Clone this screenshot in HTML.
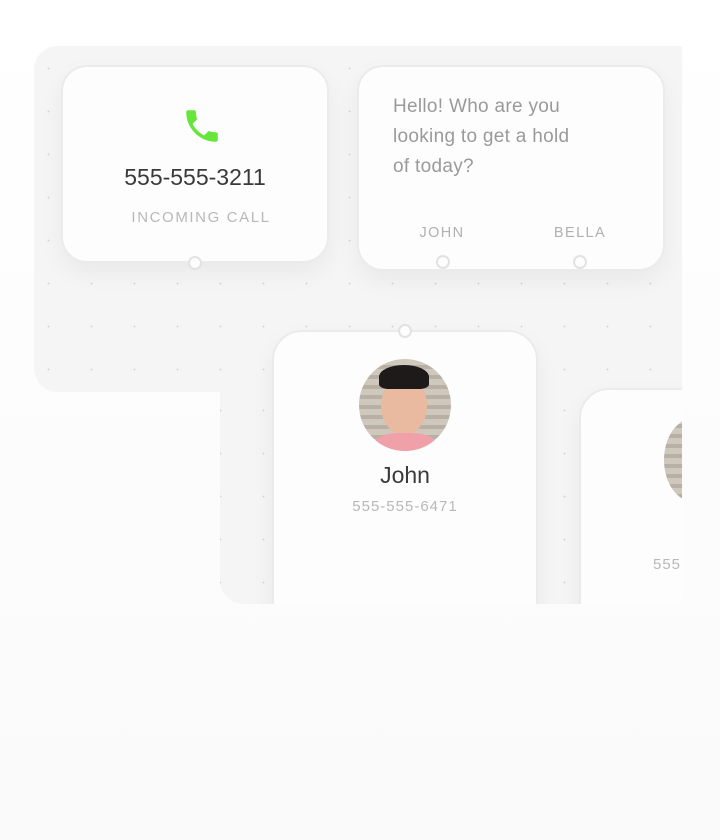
<!DOCTYPE html>
<html><head><style>
*{margin:0;padding:0;box-sizing:border-box}
body{width:720px;height:840px;background:linear-gradient(#ffffff,#fafafa);font-family:"Liberation Sans",sans-serif;position:relative;overflow:hidden}
.clip{position:absolute;left:0;top:0;width:682px;height:604px;overflow:hidden}
.panel{position:absolute;background:#f5f5f5;background-image:radial-gradient(circle,#d2d2d2 0.7px,transparent 1.1px);background-size:43px 43px;background-position:36px 44px}
.card{position:absolute;background:#fdfdfd;border:2px solid #ebebeb;border-radius:26px;box-shadow:0 10px 24px rgba(0,0,0,0.05)}
.dot{position:absolute;width:14px;height:14px;border-radius:50%;background:#fdfdfd;border:2px solid #e2e2e2}
.t{position:absolute;text-align:center}
</style></head><body>
<div class="clip">
<div class="panel" style="left:34px;top:46px;width:700px;height:346px;border-radius:24px 24px 0 24px"></div>
<div class="panel" style="left:220px;top:380px;width:520px;height:224px;border-radius:0 0 0 24px;background-position:-150px -292px"></div>

<div class="card" style="left:61px;top:65px;width:268px;height:198px"></div>
<svg style="position:absolute;left:181px;top:105px" width="42" height="42" viewBox="0 0 24 24"><path fill="#66e63a" d="M6.6 10.8c1.4 2.8 3.8 5.1 6.6 6.6l2.2-2.2c.3-.3.7-.4 1-.2 1.1.4 2.3.6 3.6.6.6 0 1 .4 1 1V20c0 .6-.4 1-1 1C10.6 21 3 13.4 3 4c0-.6.4-1 1-1h3.5c.6 0 1 .4 1 1 0 1.3.2 2.5.6 3.6.1.3 0 .7-.2 1L6.6 10.8z"/></svg>
<div class="t" style="left:61px;width:268px;top:164px;font-size:23px;color:#3a3a3a">555-555-3211</div>
<div class="t" style="left:61px;width:280px;top:209px;font-size:15px;color:#b8b8b8;letter-spacing:1.6px">INCOMING CALL</div>
<div class="dot" style="left:188px;top:256px"></div>

<div class="card" style="left:357px;top:65px;width:308px;height:206px"></div>
<div style="position:absolute;left:393px;top:92px;font-size:19px;line-height:30px;color:#9a9a9a;width:188px;letter-spacing:0.3px">Hello! Who are you looking to get a hold of today?</div>
<div class="t" style="left:402px;width:80px;top:225px;font-size:14.5px;color:#b0b0b0;letter-spacing:1.4px">JOHN</div>
<div class="t" style="left:540px;width:80px;top:225px;font-size:14.5px;color:#b0b0b0;letter-spacing:1.4px">BELLA</div>
<div class="dot" style="left:436px;top:255px"></div>
<div class="dot" style="left:573px;top:255px"></div>

<div class="card" style="left:272px;top:330px;width:266px;height:320px;border-radius:30px"></div>
<div class="dot" style="left:398px;top:324px"></div>
<div style="position:absolute;left:359px;top:359px;width:92px;height:92px;border-radius:50%;overflow:hidden;background:repeating-linear-gradient(#cfc8bd 0 6px,#b8b0a4 6px 10px)">
 <div style="position:absolute;left:22px;top:18px;width:46px;height:58px;border-radius:50%;background:#e9b9a0"></div>
 <div style="position:absolute;left:20px;top:6px;width:50px;height:24px;border-radius:50% 50% 20% 20%;background:#1e1a19"></div>
 <div style="position:absolute;left:14px;top:74px;width:64px;height:30px;border-radius:40% 40% 0 0;background:#f0a0a8"></div>
</div>
<div class="t" style="left:272px;width:266px;top:462px;font-size:23px;color:#3a3a3a">John</div>
<div class="t" style="left:272px;width:266px;top:498px;font-size:15px;color:#b8b8b8;letter-spacing:1px">555-555-6471</div>

<div class="card" style="left:579px;top:388px;width:200px;height:300px;border-radius:30px"></div>
<div style="position:absolute;left:664px;top:418px;width:60px;height:84px;border-radius:50%;background:repeating-linear-gradient(#cfc8bd 0 6px,#b8b0a4 6px 10px)"></div>
<div style="position:absolute;left:653px;top:556px;font-size:15px;color:#b8b8b8;letter-spacing:1px">555</div>
</div>
</body></html>
